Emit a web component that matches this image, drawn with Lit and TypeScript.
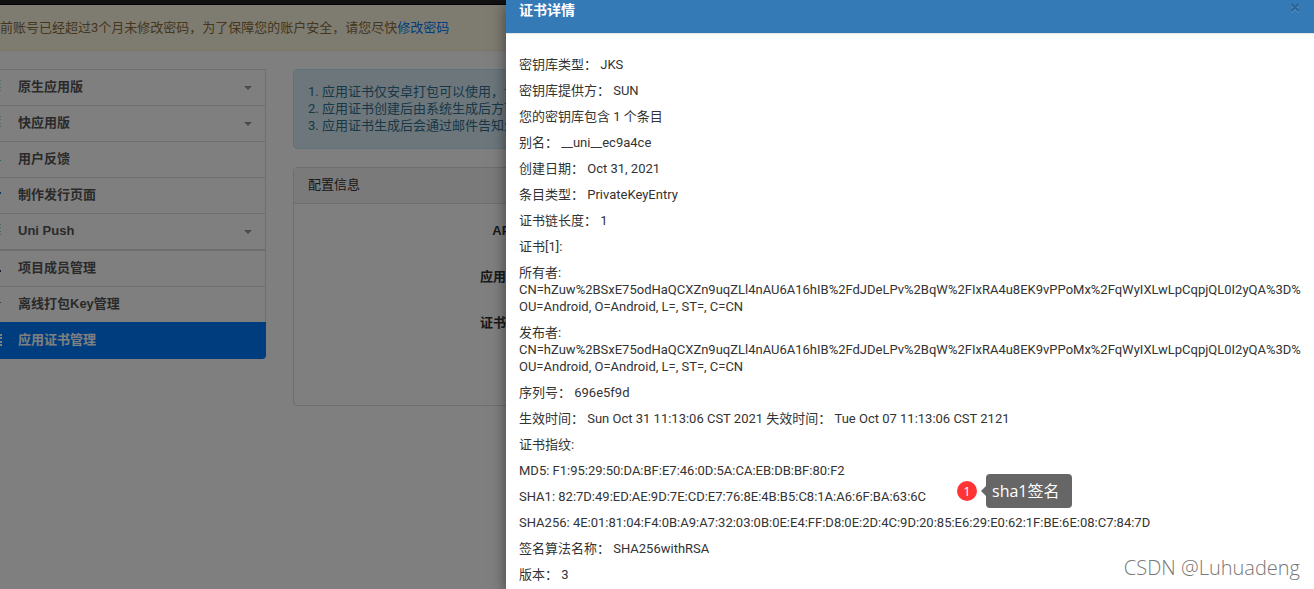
import { LitElement, html, css, svg, nothing } from "lit";
import { customElement } from "lit/decorators.js";

interface MenuItem {
  text: string;
  tone: string;
  shape: string;
  caret?: boolean;
  active?: boolean;
}

const bars = "M0 3h1v1H0zM0 6h1v1H0zM0 10h1v1H0zM0 13h1v1H0z";

const groups: MenuItem[][] = [
  [
    { text: "原生应用版", tone: "#a0dcd2", shape: bars, caret: true },
    { text: "快应用版", tone: "#a0dcd2", shape: bars, caret: true },
    { text: "用户反馈", tone: "#5bc0de", shape: "M0 11h1v1H0z" },
    { text: "制作发行页面", tone: "#1b6fc0", shape: "M0 7h1v2H0z" },
    { text: "Uni Push", tone: "#8fd8b4", shape: bars, caret: true },
  ],
  [
    { text: "项目成员管理", tone: "#333366", shape: "M0 12h1v2H0z" },
    { text: "离线打包Key管理", tone: "#337ab7", shape: "M0 8h1v1H0z" },
    { text: "应用证书管理", tone: "#ffffff", shape: "M0 3h2v2H0zM0 6h2v2H0zM0 10h2v2H0zM0 13h2v2H0z", active: true },
  ],
];

const holder =
  "CN=hZuw%2BSxE75odHaQCXZn9uqZLl4nAU6A16hIB%2FdJDeLPv%2BqW%2FIxRA4u8EK9vPPoMx%2FqWyIXLwLpCqpjQL0I2yQA%3D%";
const unit = "OU=Android, O=Android, L=, ST=, C=CN";

const lines: string[][] = [
  ["密钥库类型： JKS"],
  ["密钥库提供方： SUN"],
  ["您的密钥库包含 1 个条目"],
  ["别名： __uni__ec9a4ce"],
  ["创建日期： Oct 31, 2021"],
  ["条目类型： PrivateKeyEntry"],
  ["证书链长度： 1"],
  ["证书[1]:"],
  ["所有者:", holder, unit],
  ["发布者:", holder, unit],
  ["序列号： 696e5f9d"],
  ["生效时间： Sun Oct 31 11:13:06 CST 2021 失效时间： Tue Oct 07 11:13:06 CST 2121"],
  ["证书指纹:"],
  ["MD5: F1:95:29:50:DA:BF:E7:46:0D:5A:CA:EB:DB:BF:80:F2"],
  ["SHA1: 82:7D:49:ED:AE:9D:7E:CD:E7:76:8E:4B:B5:C8:1A:A6:6F:BA:63:6C"],
  ["SHA256: 4E:01:81:04:F4:0B:A9:A7:32:03:0B:0E:E4:FF:D8:0E:2D:4C:9D:20:85:E6:29:E0:62:1F:BE:6E:08:C7:84:7D"],
  ["签名算法名称： SHA256withRSA"],
  ["版本： 3"],
];

@customElement("side-menu")
class SideMenu extends LitElement {
  static styles = css`
    :host { display: block; font-family: "Liberation Sans", "Noto Sans CJK SC", sans-serif; }
    .group { list-style: none; margin: 0; padding: 0; border: 1px solid #ddd; border-left: 0; }
    .group:last-child { border-radius: 0 0 4px 0; border: 0; border-top: 1px solid #ddd; overflow: hidden; }
    .item + .item { border-top: 1px solid #ddd; }
    .group:last-child .item { border-right: 1px solid #ddd; }
    .link { display: flex; align-items: center; gap: 16px; box-sizing: border-box; height: 35px; padding: 0 13px 3px 0; color: #555; font-weight: bold; text-decoration: none; }
    .glyph { width: 2px; height: 18px; flex: none; }
    .label { flex: 1; }
    .caret { border: 4px solid transparent; border-top-color: #999; border-bottom: 0; margin-top: 4px; }
    .group:last-child .item.active { border-color: #007bff; }
    .active .link { height: 36px; background: #007bff; color: #fff; }
  `;
  render() {
    return groups.map(
      (g) => html`<ul class="group">
        ${g.map(
          (m) => html`<li class="item ${m.active ? "active" : ""}">
            <a class="link" href="#">
              <svg class="glyph" viewBox="0 0 2 18" aria-hidden="true">${svg`<path d=${m.shape} fill=${m.tone} />`}</svg>
              <span class="label">${m.text}</span>
              ${m.caret ? html`<span class="caret"></span>` : nothing}
            </a>
          </li>`
        )}
      </ul>`
    );
  }
}

@customElement("certificate-drawer")
class CertificateDrawer extends LitElement {
  static styles = css`
    :host { display: block; background: #fff; color: #333; }
    .head { display: flex; justify-content: space-between; align-items: flex-start; background: #337ab7; border-bottom: 1px solid #e5e5e5; padding: 0 13px 13px; }
    .title { margin: 0; font-size: 14px; line-height: 20px; color: #fff; }
    .close { border: 0; background: none; padding: 2px 0 0; width: 12px; height: 14px; line-height: 0; }
    .body { padding: 22px 0 0 13px; }
    .line { margin: 0 0 9px; white-space: nowrap; }
    .part { display: block; }
  `;
  render() {
    return html`
      <header class="head">
        <h2 class="title">证书详情</h2>
        <button class="close" aria-label="关闭">
          <svg width="10" height="11" viewBox="0 0 10 11" fill="none">
            <path d="M1.5 2.5l7 7M8.5 2.5l-7 7" stroke="#5b93c5" stroke-width="1.5" />
            <path d="M1.5 1l7 7M8.5 1l-7 7" stroke="#2a6294" stroke-width="1.8" />
          </svg>
        </button>
      </header>
      <div class="body">
        ${lines.map((l) => html`<p class="line">${l.map((t) => html`<span class="part">${t}</span>`)}</p>`)}
      </div>
    `;
  }
}

@customElement("app-root")
class AppRoot extends LitElement {
  static styles = css`
    :host { display: block; position: relative; height: 100vh; overflow: hidden; background: #fff; color: #333; font: 13px/17px Roboto, "Noto Sans CJK SC", sans-serif; }
    .topbar { height: 5px; background: #222; box-sizing: border-box; border-bottom: 1px solid #080808; }
    .alert { background: #fcf8e3; border-bottom: 1px solid #faebcc; color: #8a6d3b; padding: 14px 0; white-space: nowrap; }
    .alert a { color: #007bff; text-decoration: none; }
    .page { display: grid; grid-template-columns: 266px 1fr; gap: 27px; padding-top: 18px; }
    .notes { border: 1px solid #bce8f1; border-radius: 4px; background: #d9edf7; color: #31708f; padding: 13px 14px; margin: 0 0 18px; min-height: 52px; list-style: none; }
    .panel { border: 1px solid #ddd; border-radius: 4px; }
    .panel-head { margin: 0; padding: 8px 14px 10px; background: #f5f5f5; border-bottom: 1px solid #ddd; font-size: 13px; font-weight: normal; }
    .fields { display: grid; grid-template-columns: 238px 1fr; row-gap: 29px; margin: 0; padding: 18px 0 74px; font-family: "Liberation Sans", "Noto Sans CJK SC", sans-serif; font-weight: bold; }
    .field { text-align: right; }
    .shade { position: absolute; inset: 0; background: rgba(0, 0, 0, 0.5); }
    .drawer { position: absolute; top: 0; bottom: 0; left: 506px; right: 0; box-shadow: 0 4px 14px rgba(0, 0, 0, 0.5); }
    .mark { position: absolute; top: 474px; left: 957px; display: flex; align-items: center; }
    .num { width: 20px; line-height: 20px; border-radius: 50%; background: #ff3535; color: #fff; text-align: center; font-family: "Open Sans", sans-serif; }
    .arrow { border: 5px solid transparent; border-right-color: #666; border-left: 0; margin-left: 4px; }
    .tip { background: #666; color: #fff; border-radius: 4px; padding: 0 13px 0 6px; font: 16px/34px "Open Sans", "Noto Sans CJK SC", sans-serif; }
    .credit { position: absolute; right: 14px; bottom: 7px; font: 300 20px/28px "Open Sans", sans-serif; color: #777; }
  `;
  render() {
    return html`
      <div class="topbar"></div>
      <div class="alert">前账号已经超过3个月未修改密码，为了保障您的账户安全，请您尽快<a href="#">修改密码</a></div>
      <div class="page">
        <side-menu></side-menu>
        <main>
          <ul class="notes">
            <li>1. 应用证书仅安卓打包可以使用，证</li>
            <li>2. 应用证书创建后由系统生成后方可</li>
            <li>3. 应用证书生成后会通过邮件告知生</li>
          </ul>
          <section class="panel">
            <h3 class="panel-head">配置信息</h3>
            <div class="fields">
              <span class="field">APPID</span><span></span>
              <span class="field">应用名称</span><span></span>
              <span class="field">证书状态</span><span></span>
            </div>
          </section>
        </main>
      </div>
      <div class="shade"></div>
      <certificate-drawer class="drawer"></certificate-drawer>
      <div class="mark"><span class="num">1</span><span class="arrow"></span><span class="tip">sha1签名</span></div>
      <div class="credit">CSDN @Luhuadeng</div>
    `;
  }
}
